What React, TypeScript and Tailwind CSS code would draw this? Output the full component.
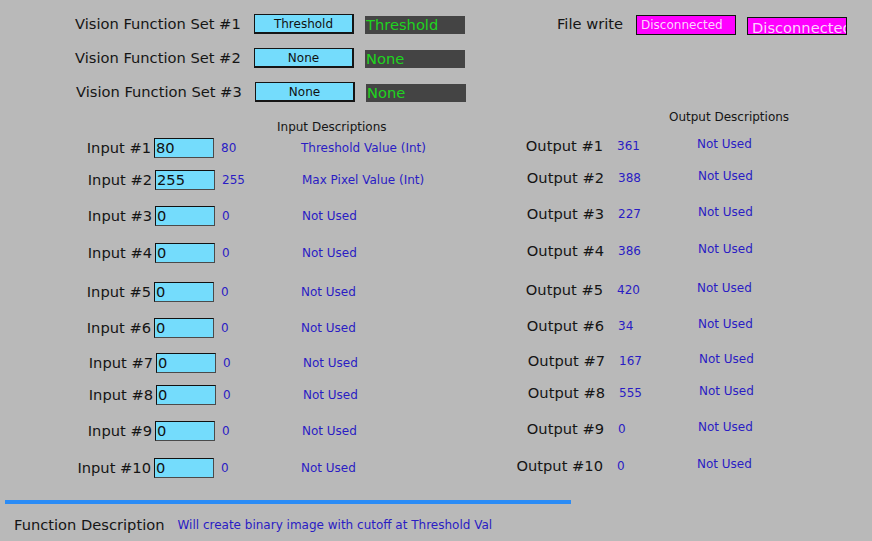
import React from "react";

const visionRows = [
  { label: "Vision Function Set #1", btn: "Threshold", out: "Threshold", row: "flex h-[20px] items-start pl-[75px]" },
  { label: "Vision Function Set #2", btn: "None", out: "None", row: "flex h-[20px] items-start pl-[75px] mt-[14px]" },
  { label: "Vision Function Set #3", btn: "None", out: "None", row: "flex h-[20px] items-start pl-[76px] mt-[14px]" },
];

const inputs = [
  { n: "1", v: "80", d: "Threshold Value (Int)", row: "flex h-[20px] items-start mt-[4px]" },
  { n: "2", v: "255", d: "Max Pixel Value (Int)", row: "flex h-[20px] items-start mt-[12px] pl-[1px]" },
  { n: "3", v: "0", d: "Not Used", row: "flex h-[20px] items-start mt-[16px] pl-[1px]" },
  { n: "4", v: "0", d: "Not Used", row: "flex h-[20px] items-start mt-[17px] pl-[1px]" },
  { n: "5", v: "0", d: "Not Used", row: "flex h-[20px] items-start mt-[19px]" },
  { n: "6", v: "0", d: "Not Used", row: "flex h-[20px] items-start mt-[16px]" },
  { n: "7", v: "0", d: "Not Used", row: "flex h-[20px] items-start mt-[15px] pl-[2px]" },
  { n: "8", v: "0", d: "Not Used", row: "flex h-[20px] items-start mt-[12px] pl-[2px]" },
  { n: "9", v: "0", d: "Not Used", row: "flex h-[20px] items-start mt-[16px] pl-[1px]" },
  { n: "10", v: "0", d: "Not Used", row: "flex h-[20px] items-start mt-[17px]" },
];

const outputs = [
  { n: "1", v: "361", row: "flex h-[20px] items-start mt-[12px]" },
  { n: "2", v: "388", row: "flex h-[20px] items-start mt-[12px] pl-[1px]" },
  { n: "3", v: "227", row: "flex h-[20px] items-start mt-[16px] pl-[1px]" },
  { n: "4", v: "386", row: "flex h-[20px] items-start mt-[17px] pl-[1px]" },
  { n: "5", v: "420", row: "flex h-[20px] items-start mt-[19px]" },
  { n: "6", v: "34", row: "flex h-[20px] items-start mt-[16px] pl-[1px]" },
  { n: "7", v: "167", row: "flex h-[20px] items-start mt-[15px] pl-[2px]" },
  { n: "8", v: "555", row: "flex h-[20px] items-start mt-[12px] pl-[2px]" },
  { n: "9", v: "0", row: "flex h-[20px] items-start mt-[16px] pl-[1px]" },
  { n: "10", v: "0", row: "flex h-[20px] items-start mt-[17px]" },
];

export default function App() {
  return (
    <div
      className="w-[872px] h-[541px] overflow-hidden bg-[#b9b9b9] text-[#151515] flex flex-col pt-[14px]"
      style={{ fontFamily: '"DejaVu Sans", Verdana, sans-serif' }}
    >
      {/* Top section */}
      <div className="flex h-[88px]">
        <div className="flex flex-col w-[466px]">
          {visionRows.map((r) => (
            <div key={r.label} className={r.row}>
              <div className="w-[179px] text-[14.67px] leading-[20px] whitespace-nowrap">{r.label}</div>
              <div className="w-[100px] h-[20px] bg-[#74dcfc] border border-[#151515] border-r-2 border-b-2 text-[12px] leading-[18px] text-center text-[#111]">
                {r.btn}
              </div>
              <div className="ml-[11px] mt-[2px] w-[100px] h-[18px] bg-[#444444] text-[#1fd41f] text-[14.67px] leading-[18px] pl-[1px] whitespace-nowrap overflow-hidden">
                {r.out}
              </div>
            </div>
          ))}
        </div>
        <div className="flex items-start ml-[91px]">
          <div className="text-[14.67px] leading-[19px] whitespace-nowrap">File write</div>
          <div className="ml-[13px] mt-[1px] w-[100px] h-[20px] bg-[#ff00ff] border border-[#111] text-[12px] leading-[19px] text-[#fcd4fc] pl-[4px] whitespace-nowrap overflow-hidden">
            Disconnected
          </div>
          <div className="ml-[11px] mt-[3px] w-[100px] h-[18px] bg-[#ff00ff] border border-[#111] text-[14.67px] leading-[20px] text-[#fcd4fc] pl-[4px] whitespace-nowrap overflow-hidden">
            Disconnected
          </div>
        </div>
      </div>

      {/* Middle section */}
      <div className="flex">
        <div className="flex flex-col w-[500px]">
          <div className="ml-[277px] mt-[18px] text-[12px] leading-[14px] whitespace-nowrap">Input Descriptions</div>
          {inputs.map((r) => (
            <div key={r.n} className={r.row}>
              <div className="w-[154px] pr-[3px] text-right text-[14.67px] leading-[20px] whitespace-nowrap">
                Input #{r.n}
              </div>
              <div className="w-[60px] h-[20px] bg-[#74dcfc] border border-[#111] border-r-[#4a4a4a] border-b-[#4a4a4a] text-[14.67px] leading-[18px] text-[#111] pl-[1px]">
                {r.v}
              </div>
              <div className="ml-[7px] w-[80px] text-[12px] leading-[20px] text-[#2a1cc4]">{r.v}</div>
              <div className="text-[12px] leading-[20px] text-[#2a1cc4] whitespace-nowrap">{r.d}</div>
            </div>
          ))}
        </div>
        <div className="flex flex-col">
          <div className="ml-[169px] mt-[8px] text-[12px] leading-[14px] whitespace-nowrap">Output Descriptions</div>
          {outputs.map((r) => (
            <div key={r.n} className={r.row}>
              <div className="w-[103px] text-right text-[14.67px] leading-[20px] whitespace-nowrap">Output #{r.n}</div>
              <div className="ml-[14px] w-[80px] text-[12px] leading-[20px] text-[#2a1cc4]">{r.v}</div>
              <div className="text-[12px] leading-[16px] text-[#2a1cc4] whitespace-nowrap">Not Used</div>
            </div>
          ))}
        </div>
      </div>

      {/* Divider */}
      <div className="ml-[5px] mt-[22px] w-[566px] h-[4px] bg-[#2b8cf6]" />

      {/* Function description */}
      <div className="flex items-center mt-[11px] h-[20px] pl-[14px]">
        <div className="text-[14.67px] leading-[20px] whitespace-nowrap">Function Description</div>
        <div className="ml-[13px] text-[12px] leading-[20px] text-[#2a1cc4] whitespace-nowrap">
          Will create binary image with cutoff at Threshold Val
        </div>
      </div>
    </div>
  );
}
